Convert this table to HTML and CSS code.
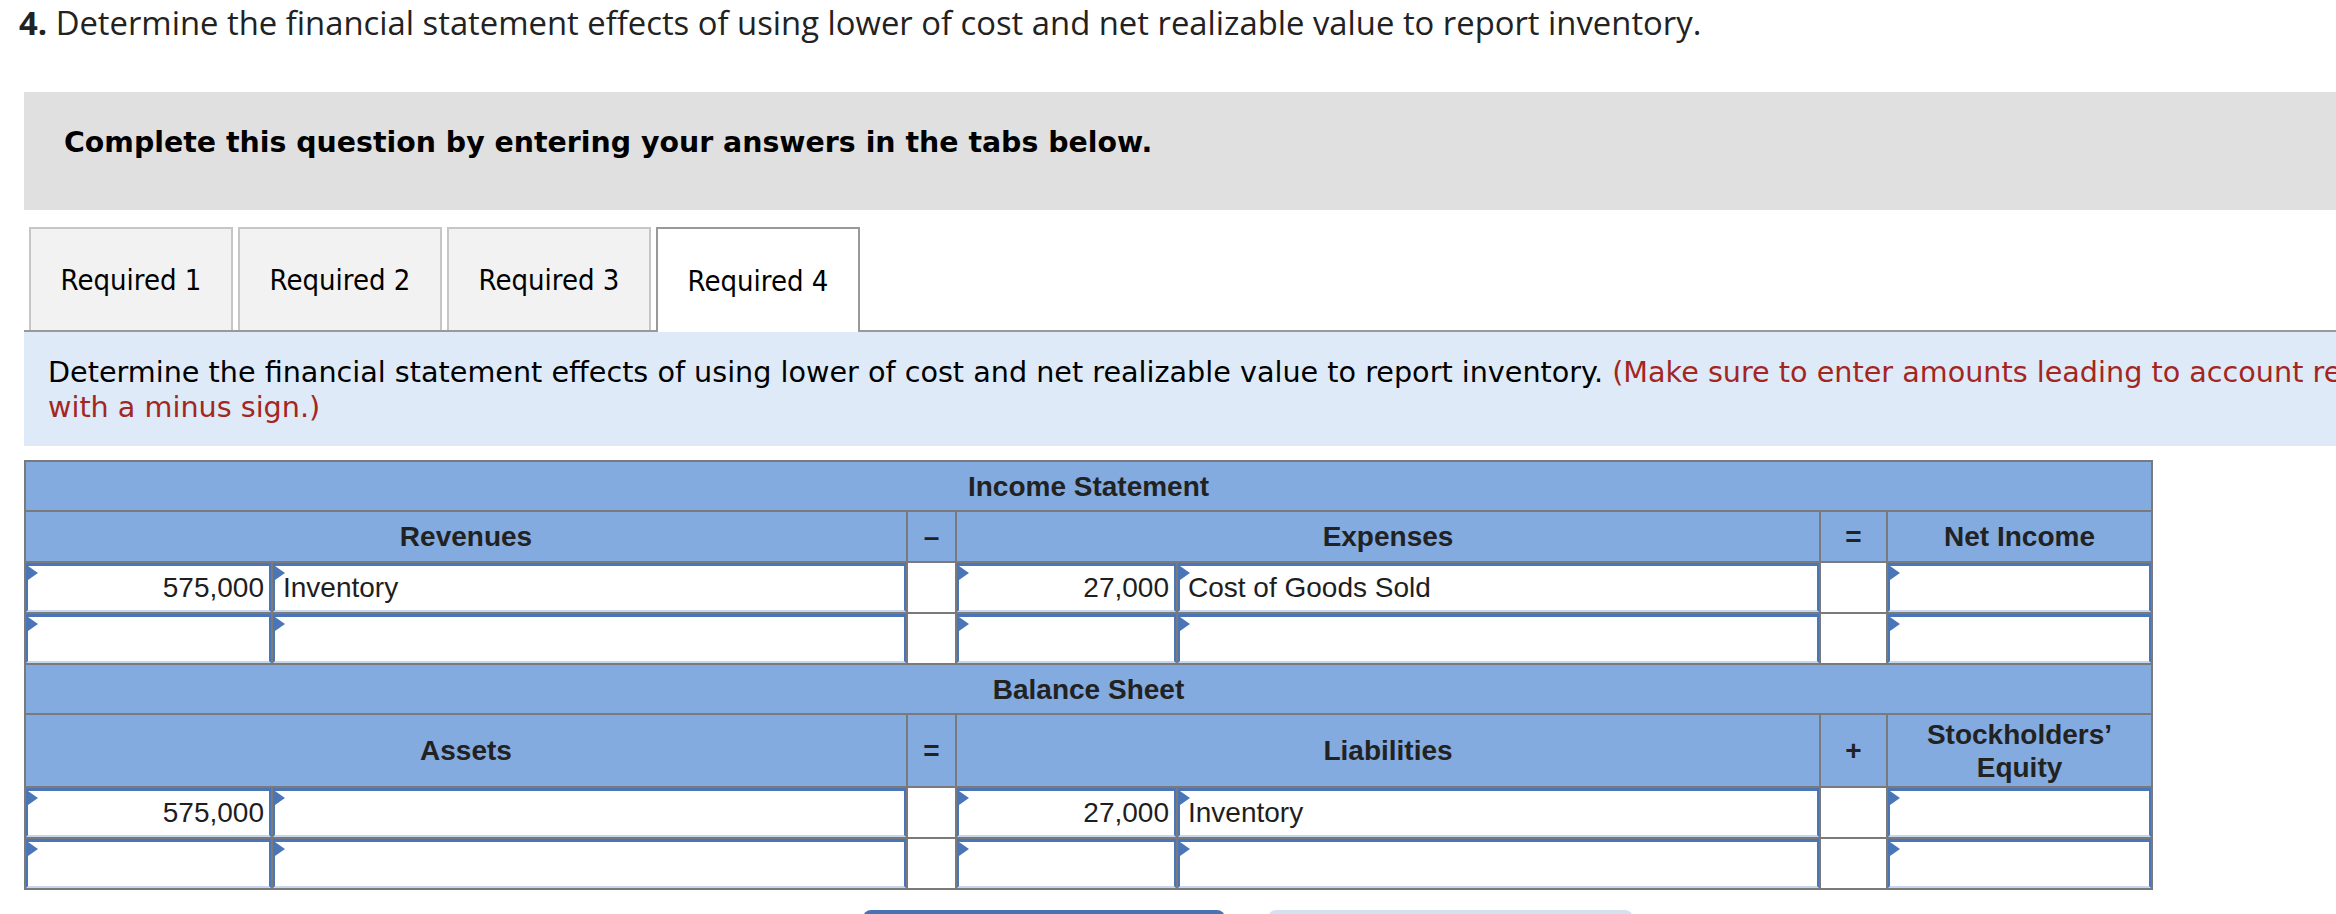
FILE: index.html
```html
<!DOCTYPE html>
<html lang="en">
<head>
<meta charset="utf-8">
<title>Required 4</title>
<link rel="stylesheet" href="styles.css">
</head>
<body>
<div class="page">
  <h1 class="title"><b>4.</b> Determine the financial statement effects of using lower of cost and net realizable value to report inventory.</h1>

  <div class="prompt">Complete this question by entering your answers in the tabs below.</div>

  <div class="tabs">
    <div class="tab">Required 1</div>
    <div class="tab">Required 2</div>
    <div class="tab">Required 3</div>
    <div class="tab active">Required 4</div>
  </div>

  <div class="instr">Determine the financial statement effects of using lower of cost and net realizable value to report inventory. <span class="warn">(Make sure to enter amounts leading to account reductions<br>with a minus sign.)</span></div>

  <table class="fs">
    <colgroup>
      <col class="c-amt1">
      <col class="c-acc1">
      <col class="c-op1">
      <col class="c-amt2">
      <col class="c-acc2">
      <col class="c-op2">
      <col class="c-res">
    </colgroup>
    <tr class="sect"><th colspan="7">Income Statement</th></tr>
    <tr class="hdr">
      <th colspan="2">Revenues</th>
      <th class="op">–</th>
      <th colspan="2">Expenses</th>
      <th class="op">=</th>
      <th>Net Income</th>
    </tr>
    <tr class="data">
      <td><div class="inp num">575,000</div></td>
      <td><div class="inp">Inventory</div></td>
      <td class="op"></td>
      <td><div class="inp num">27,000</div></td>
      <td><div class="inp">Cost of Goods Sold</div></td>
      <td class="op"></td>
      <td><div class="inp num"></div></td>
    </tr>
    <tr class="data">
      <td><div class="inp num"></div></td>
      <td><div class="inp"></div></td>
      <td class="op"></td>
      <td><div class="inp num"></div></td>
      <td><div class="inp"></div></td>
      <td class="op"></td>
      <td><div class="inp num"></div></td>
    </tr>
    <tr class="sect"><th colspan="7">Balance Sheet</th></tr>
    <tr class="hdr tall">
      <th colspan="2">Assets</th>
      <th class="op">=</th>
      <th colspan="2">Liabilities</th>
      <th class="op">+</th>
      <th>Stockholders’ Equity</th>
    </tr>
    <tr class="data">
      <td><div class="inp num">575,000</div></td>
      <td><div class="inp"></div></td>
      <td class="op"></td>
      <td><div class="inp num">27,000</div></td>
      <td><div class="inp">Inventory</div></td>
      <td class="op"></td>
      <td><div class="inp num"></div></td>
    </tr>
    <tr class="data">
      <td><div class="inp num"></div></td>
      <td><div class="inp"></div></td>
      <td class="op"></td>
      <td><div class="inp num"></div></td>
      <td><div class="inp"></div></td>
      <td class="op"></td>
      <td><div class="inp num"></div></td>
    </tr>
  </table>

  <div class="nav">
    <button class="btn prev">&lt; Required 3</button>
    <button class="btn next">Required 4 &gt;</button>
  </div>
</div>
</body>
</html>
```

FILE: styles.css
```css
html, body {
  margin: 0;
  padding: 0;
  background: #ffffff;
  overflow: hidden;
}

.page {
  width: 2560px;
}

.title {
  margin: 0;
  padding: 4px 0 0 19px;
  height: 37px;
  font: 400 32.8px/37px "Open Sans", Lato, sans-serif;
  color: #222222;
  white-space: nowrap;
}

.title b {
  font-weight: 700;
}

.prompt {
  margin: 51px 0 0 24px;
  height: 118px;
  box-sizing: border-box;
  padding: 35px 40px 0;
  background: #e0e0e0;
  font: 700 28.4px/32px "DejaVu Sans", Verdana, sans-serif;
  color: #000000;
}

.tabs {
  margin: 17px 0 0 24px;
  padding-left: 5px;
  display: flex;
  align-items: flex-start;
  gap: 5px;
  border-bottom: 2px solid #999999;
}

.tab {
  width: 204px;
  height: 103px;
  box-sizing: border-box;
  border: 2px solid #c6c6c6;
  border-bottom: none;
  background: #f2f2f2;
  display: flex;
  align-items: center;
  justify-content: center;
  font: 400 29px/32px "DejaVu Sans Condensed", "DejaVu Sans", sans-serif;
  font-stretch: condensed;
  color: #000000;
}

.tab.active {
  background: #ffffff;
  border-color: #999999;
  height: 105px;
  margin-bottom: -2px;
}

.instr {
  margin-left: 24px;
  height: 114px;
  box-sizing: border-box;
  padding: 23px 24px 0;
  background: #deeaf7;
  font: 400 28.65px/35px "DejaVu Sans", Verdana, sans-serif;
  color: #000000;
  white-space: nowrap;
}

.warn {
  color: #a3261f;
}

.fs {
  margin: 14px 0 0 24px;
  border-collapse: collapse;
  table-layout: fixed;
  width: 2129px;
  font-family: "Liberation Sans", Arial, sans-serif;
  font-size: 28px;
  color: #1e1e1e;
}

.c-amt1 { width: 247px; }
.c-acc1 { width: 635px; }
.c-op1  { width: 49px; }
.c-amt2 { width: 221px; }
.c-acc2 { width: 643px; }
.c-op2  { width: 67px; }
.c-res  { width: 265px; }

.fs th,
.fs td {
  border: 2px solid #7a7a7a;
  padding: 0;
}

.fs th {
  background: #83abdf;
  font-weight: 700;
  text-align: center;
  line-height: 33px;
  color: #222222;
}

.sect th {
  height: 48px;
}

.hdr th {
  height: 49px;
}

.hdr.tall th {
  height: 71px;
}

.data td {
  background: #ffffff;
  height: 49px;
  vertical-align: top;
}

.inp {
  position: relative;
  height: 49px;
  box-sizing: border-box;
  border-top: 3px solid #4a76b7;
  border-left: 2px solid #4a76b7;
  border-right: 2px solid #4a76b7;
  border-bottom: 2px solid #c6d6ee;
  background: #ffffff;
  padding: 0 5px 0 8px;
  line-height: 43px;
  color: #1e1e1e;
  white-space: nowrap;
  overflow: hidden;
}

.inp::before {
  content: "";
  position: absolute;
  left: 0;
  top: 0;
  border-left: 10px solid #4a76b7;
  border-top: 7px solid transparent;
  border-bottom: 7px solid transparent;
}

.inp.num {
  text-align: right;
}

.nav {
  margin-top: 20px;
  padding-left: 863px;
  display: flex;
  gap: 43px;
}

.btn {
  height: 60px;
  border: none;
  border-radius: 8px;
  font: 700 26px "Liberation Sans", Arial, sans-serif;
}

.btn.prev {
  width: 362px;
  background: #4a72b2;
  color: #ffffff;
}

.btn.next {
  width: 365px;
  background: #d6e1ef;
  color: #4a72b2;
}
```
